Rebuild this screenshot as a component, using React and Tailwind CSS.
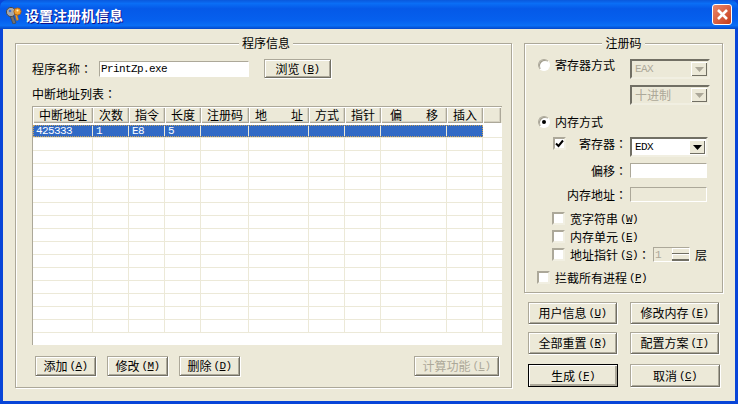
const mono = "font-['Liberation_Mono',monospace] text-[11px] tracking-[-0.6px]";

function L({ children }) {
  return <span className={mono}>{children}</span>;
}

function Colon() {
  return <span className="font-['Noto_Sans_CJK_TC',sans-serif]">：</span>;
}

function Hot({ k }) {
  return (
    <span className={`${mono} ml-[2px]`}>
      (<span className="underline">{k}</span>)
    </span>
  );
}

function Btn({ label, k, className = "", disabled = false, primary = false }) {
  const frame = primary
    ? "border border-black shadow-[inset_1px_1px_0_#fff,inset_-2px_-2px_0_#aca899]"
    : "shadow-[inset_1px_1px_0_#aca899,inset_-1px_-1px_0_#716f64,inset_2px_2px_0_#fff,inset_-2px_-2px_0_#aca899,1px_1px_0_#fff]";
  return (
    <div
      className={`flex items-center justify-center bg-[#ece9d8] ${frame} ${
        disabled ? "text-[#aca899]" : "text-black"
      } ${className}`}
    >
      {label}
      <Hot k={k} />
    </div>
  );
}

function Group({ title, className = "", titleClass = "", children }) {
  return (
    <div className={`relative border border-[#aca899] shadow-[inset_1px_1px_0_#fff,1px_1px_0_#fff] ${className}`}>
      <div className={`absolute -top-[8px] left-0 right-0 flex justify-center leading-[14px] ${titleClass}`}>
        <span className="bg-[#ece9d8] px-[3px]">{title}</span>
      </div>
      {children}
    </div>
  );
}

function Radio({ checked }) {
  return (
    <span className="flex h-[12px] w-[12px] shrink-0 items-center justify-center rounded-full border border-[#aca899] border-r-white border-b-white bg-white shadow-[inset_1px_1px_0_#a09c8c]">
      {checked && <span className="h-[4px] w-[4px] rounded-full bg-black" />}
    </span>
  );
}

function Check({ checked }) {
  return (
    <span className="flex h-[13px] w-[13px] shrink-0 items-center justify-center border-2 border-[#aca899] border-r-[#f1efe2] border-b-[#f1efe2] bg-white">
      {checked && (
        <svg width="9" height="9" viewBox="0 0 9 9">
          <path d="M1 4.5 L3.5 7 L8 1.5" fill="none" stroke="#000" strokeWidth="2" />
        </svg>
      )}
    </span>
  );
}

function Combo({ value, disabled, latin, className = "" }) {
  return (
    <div
      className={`flex items-stretch border-2 border-[#716f64] border-r-[#f1efe2] border-b-[#f1efe2] p-px ${
        disabled ? "bg-[#ece9d8] text-[#aca899]" : "bg-white text-black"
      } ${className}`}
    >
      <span className="flex flex-1 items-center pl-[2px]">{latin ? <L>{value}</L> : value}</span>
      <span className="flex w-[16px] items-center justify-center bg-[#ece9d8] shadow-[inset_1px_1px_0_#fff,inset_-1px_-1px_0_#716f64]">
        <svg width="9" height="5" viewBox="0 0 9 5">
          <path d="M0 0 H9 L4.5 5 Z" fill={disabled ? "#aca899" : "#000"} />
        </svg>
      </span>
    </div>
  );
}

function TextBox({ value, disabled, className = "" }) {
  return (
    <div
      className={`flex items-center border border-[#aca899] border-r-white border-b-white ${
        disabled ? "bg-[#ece9d8]" : "bg-white"
      } ${className}`}
    >
      {value}
    </div>
  );
}

const cols = [
  ["中断地址", 60],
  ["次数", 36],
  ["指令", 36],
  ["长度", 36],
  ["注册码", 48],
  ["地　　址", 60],
  ["方式", 36],
  ["指针", 36],
  ["偏　　移", 66],
  ["插入", 36],
  ["", 18],
];

const firstRow = ["425333", "1", "E8", "5"];

function Cell({ w, bordered, text }) {
  return (
    <div
      style={{ width: w }}
      className={`flex shrink-0 items-center overflow-hidden pl-[3px] leading-[12px] ${
        bordered ? "border-r border-[#ece9d8]" : ""
      }`}
    >
      {text ? <L>{text}</L> : null}
    </div>
  );
}

function Table() {
  const rows = Array.from({ length: 16 }, (_, i) => i);
  const data = cols.slice(0, 10);
  return (
    <div className="h-[239px] w-[470px] overflow-hidden border-l border-t border-[#aca899] bg-white">
      <div className="flex h-[16px] bg-[#ece9d8]">
        {cols.map(([name, w], i) => (
          <div
            key={i}
            style={{ width: w }}
            className="flex shrink-0 items-center justify-center whitespace-pre shadow-[inset_1px_1px_0_#fff,inset_-1px_-1px_0_#aca899,inset_-2px_-2px_0_#d6d2c2] leading-[14px]"
          >
            {name}
          </div>
        ))}
      </div>
      <div className="h-[2px]" />
      {rows.map((r) => (
        <div key={r} className="flex h-[13px] border-b border-[#ece9d8]">
          {r === 0 ? (
            <div className="flex bg-[#316ac5] text-white outline-1 -outline-offset-1 outline-dotted outline-[#c9a35a]">
              {data.map(([, w], i) => (
                <Cell key={i} w={w} bordered={i < 9} text={firstRow[i]} />
              ))}
            </div>
          ) : (
            data.map(([, w], i) => <Cell key={i} w={w} bordered />)
          )}
          <Cell w={18} />
        </div>
      ))}
    </div>
  );
}

function CheckLine({ checked, label, k, className = "" }) {
  return (
    <div className={`flex h-[13px] items-center ${className}`}>
      <Check checked={checked} />
      <span className="ml-[5px]">{label}</span>
      {k && <Hot k={k} />}
    </div>
  );
}

export default function App() {
  return (
    <div className="flex h-[404px] w-[738px] flex-col overflow-hidden bg-[#0845d8] font-['Noto_Sans_CJK_SC','Liberation_Sans',sans-serif] text-[12px] leading-[14px] text-black">
      <div className="flex h-[29px] shrink-0 items-center rounded-t-[7px] bg-[linear-gradient(180deg,#0a58dc_0%,#0a6ef5_12%,#0559e8_30%,#0660ee_70%,#0a6ef5_88%,#0347c9_100%)] pl-[5px] pr-[6px]">
        <svg width="18" height="18" viewBox="0 0 18 18" className="shrink-0">
          <path d="M8 9 L11 17 L8 18 L5 10 Z" fill="#6f6f6f" stroke="#3f3f3f" strokeWidth="0.6" />
          <circle cx="6" cy="6" r="4.6" fill="#a8a8a8" stroke="#4a4a4a" />
          <circle cx="5" cy="5" r="1.3" fill="#3a6fd8" />
          <path d="M12 8 L13.5 14 L11.5 14.5 L10 8.5 Z" fill="#e89a2c" stroke="#a8621a" strokeWidth="0.5" />
          <circle cx="12.5" cy="5.5" r="3.6" fill="#f0a030" stroke="#a8621a" />
          <circle cx="12.5" cy="4.5" r="1" fill="#fff2c0" />
        </svg>
        <span className="ml-[2px] flex-1 text-[14px] font-bold text-white [text-shadow:1px_1px_0_#0f1089]">
          设置注册机信息
        </span>
        <div className="flex h-[21px] w-[20px] items-center justify-center rounded-[3px] border border-white bg-gradient-to-br from-[#e9866a] to-[#c63a14]">
          <svg width="13" height="13" viewBox="0 0 13 13">
            <path d="M2 2 L11 11 M11 2 L2 11" stroke="#fff" strokeWidth="2.6" />
          </svg>
        </div>
      </div>

      <div className="mx-[3px] mb-[3px] flex flex-1 gap-[12px] bg-[#ece9d8] pb-[13px] pl-[12px] pt-[14px]">
        <Group title="程序信息" titleClass="pl-[5px]" className="h-[345px] w-[497px]">
          <div className="flex h-full flex-col pl-[16px] pt-[15px]">
            <div className="flex h-[19px] items-center">
              <span className="w-[67px]">
                程序名称
                <Colon />
              </span>
              <TextBox className="h-[16px] w-[150px] pl-[1px]" value={<L>PrintZp.exe</L>} />
              <Btn label="浏览" k="B" className="ml-[15px] h-[19px] w-[67px]" />
            </div>
            <div className="mt-[9px] h-[14px]">
              中断地址列表
              <Colon />
            </div>
            <div className="mt-[5px]">
              <Table />
            </div>
            <div className="mt-[11px] flex pl-[3px]">
              <Btn label="添加" k="A" className="h-[20px] w-[61px]" />
              <Btn label="修改" k="M" className="ml-[11px] h-[20px] w-[61px]" />
              <Btn label="删除" k="D" className="ml-[11px] h-[20px] w-[61px]" />
              <Btn label="计算功能" k="L" disabled className="ml-[174px] h-[20px] w-[85px]" />
            </div>
          </div>
        </Group>

        <div className="flex w-[199px] flex-col">
          <Group title="注册码" className="h-[250px]">
            <div className="flex h-full flex-col pl-[13px] pt-[15px]">
              <div className="flex items-start">
                <div className="flex h-[12px] items-center">
                  <Radio />
                  <span className="ml-[5px] w-[76px]">寄存器方式</span>
                </div>
                <div className="ml-[-1px] flex flex-col gap-[6px]">
                  <Combo value="EAX" latin disabled className="h-[20px] w-[80px]" />
                  <Combo value="十进制" disabled className="h-[20px] w-[80px]" />
                </div>
              </div>
              <div className="mt-[11px] flex h-[12px] items-center">
                <Radio checked />
                <span className="ml-[5px]">内存方式</span>
              </div>
              <div className="mt-[9px] flex h-[20px] items-start pl-[15px]">
                <Check checked />
                <span className="ml-[13px] w-[51px]">
                  寄存器
                  <Colon />
                </span>
                <Combo value="EDX" latin className="h-[20px] w-[78px]" />
              </div>
              <div className="mt-[6px] flex h-[15px] items-center justify-end pr-[15px]">
                <span className="mr-[3px]">
                  偏移
                  <Colon />
                </span>
                <TextBox className="h-[15px] w-[77px]" />
              </div>
              <div className="mt-[9px] flex h-[15px] items-center justify-end pr-[15px]">
                <span className="mr-[3px]">
                  内存地址
                  <Colon />
                </span>
                <TextBox disabled className="h-[15px] w-[77px]" />
              </div>
              <CheckLine label="宽字符串" k="W" className="ml-[14px] mt-[10px]" />
              <CheckLine label="内存单元" k="E" className="ml-[14px] mt-[5px]" />
              <div className="ml-[14px] mt-[5px] flex h-[13px] items-center">
                <Check />
                <span className="ml-[5px]">地址指针</span>
                <Hot k="S" />
                <Colon />
                <div className="ml-[3px] flex h-[15px] w-[37px] border border-[#aca899] border-r-white border-b-white">
                  <span className={`${mono} flex-1 pl-[1px] text-[#aca899]`}>1</span>
                  <span className="flex w-[17px] flex-col bg-[#ece9d8]">
                    <span className="h-[6px] border-b border-[#716f64] shadow-[inset_1px_1px_0_#fff]" />
                    <span className="h-[7px] border-b-2 border-[#716f64] shadow-[inset_1px_1px_0_#fff]" />
                  </span>
                </div>
                <span className="ml-[5px]">层</span>
              </div>
              <CheckLine label="拦截所有进程" k="P" className="ml-[-1px] mt-[10px]" />
            </div>
          </Group>

          <div className="mt-[9px] grid grid-cols-[89px_89px] gap-x-[13px] gap-y-[8px] pl-[4px]">
            <Btn label="用户信息" k="U" className="h-[22px]" />
            <Btn label="修改内存" k="E" className="h-[22px]" />
            <Btn label="全部重置" k="R" className="h-[22px]" />
            <Btn label="配置方案" k="T" className="h-[22px]" />
            <Btn label="生成" k="F" primary className="mt-[2px] h-[23px] w-[90px]" />
            <Btn label="取消" k="C" className="mt-[2px] h-[23px] w-[90px]" />
          </div>
        </div>
      </div>
    </div>
  );
}
